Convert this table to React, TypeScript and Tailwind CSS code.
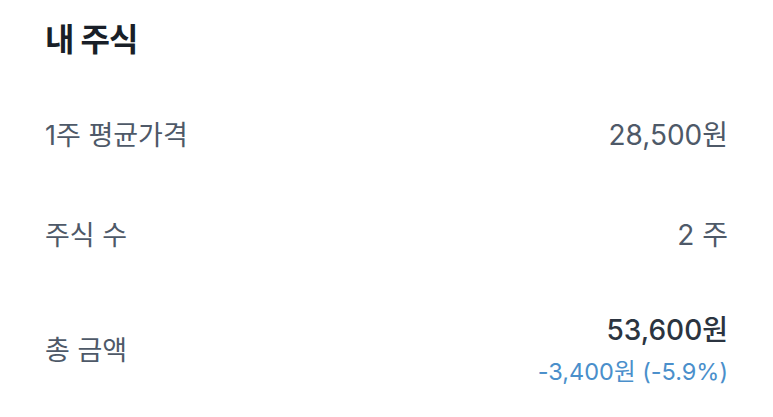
const font = {fontFamily: 'Inter, "Noto Sans CJK KR", sans-serif'};

const Row = ({label, children}: {label: string; children: React.ReactNode}) => {
    return (
        <div className="flex items-center justify-between">
            <span className="text-[27px] leading-none text-[#4e5968]">{label}</span>
            <div className="flex flex-col items-end">{children}</div>
        </div>
    );
};

const App = () => {
    return (
        <div className="h-[417px] w-[773px] bg-white px-[45px] pt-[22px]" style={font}>
            <h1 className="text-[32px] font-bold leading-[36px] tracking-tight text-[#191f28]">내 주식</h1>
            <div className="mt-[63px] flex flex-col">
                <Row label="1주 평균가격">
                    <span className="text-[28px] leading-[28px] text-[#4e5968]">28,500원</span>
                </Row>
                <div className="mt-[72px]">
                    <Row label="주식 수">
                        <span className="text-[28px] leading-[28px] text-[#4e5968]">2 주</span>
                    </Row>
                </div>
                <div className="mt-[66px]">
                    <Row label="총 금액">
                        <span className="text-[28px] font-medium leading-[30px] text-[#2b3440]">53,600원</span>
                        <span className="mt-[14px] text-[23.5px] leading-[26px] text-[#4a8fcb]">-3,400원 (-5.9%)</span>
                    </Row>
                </div>
            </div>
        </div>
    );
};

export default App;
